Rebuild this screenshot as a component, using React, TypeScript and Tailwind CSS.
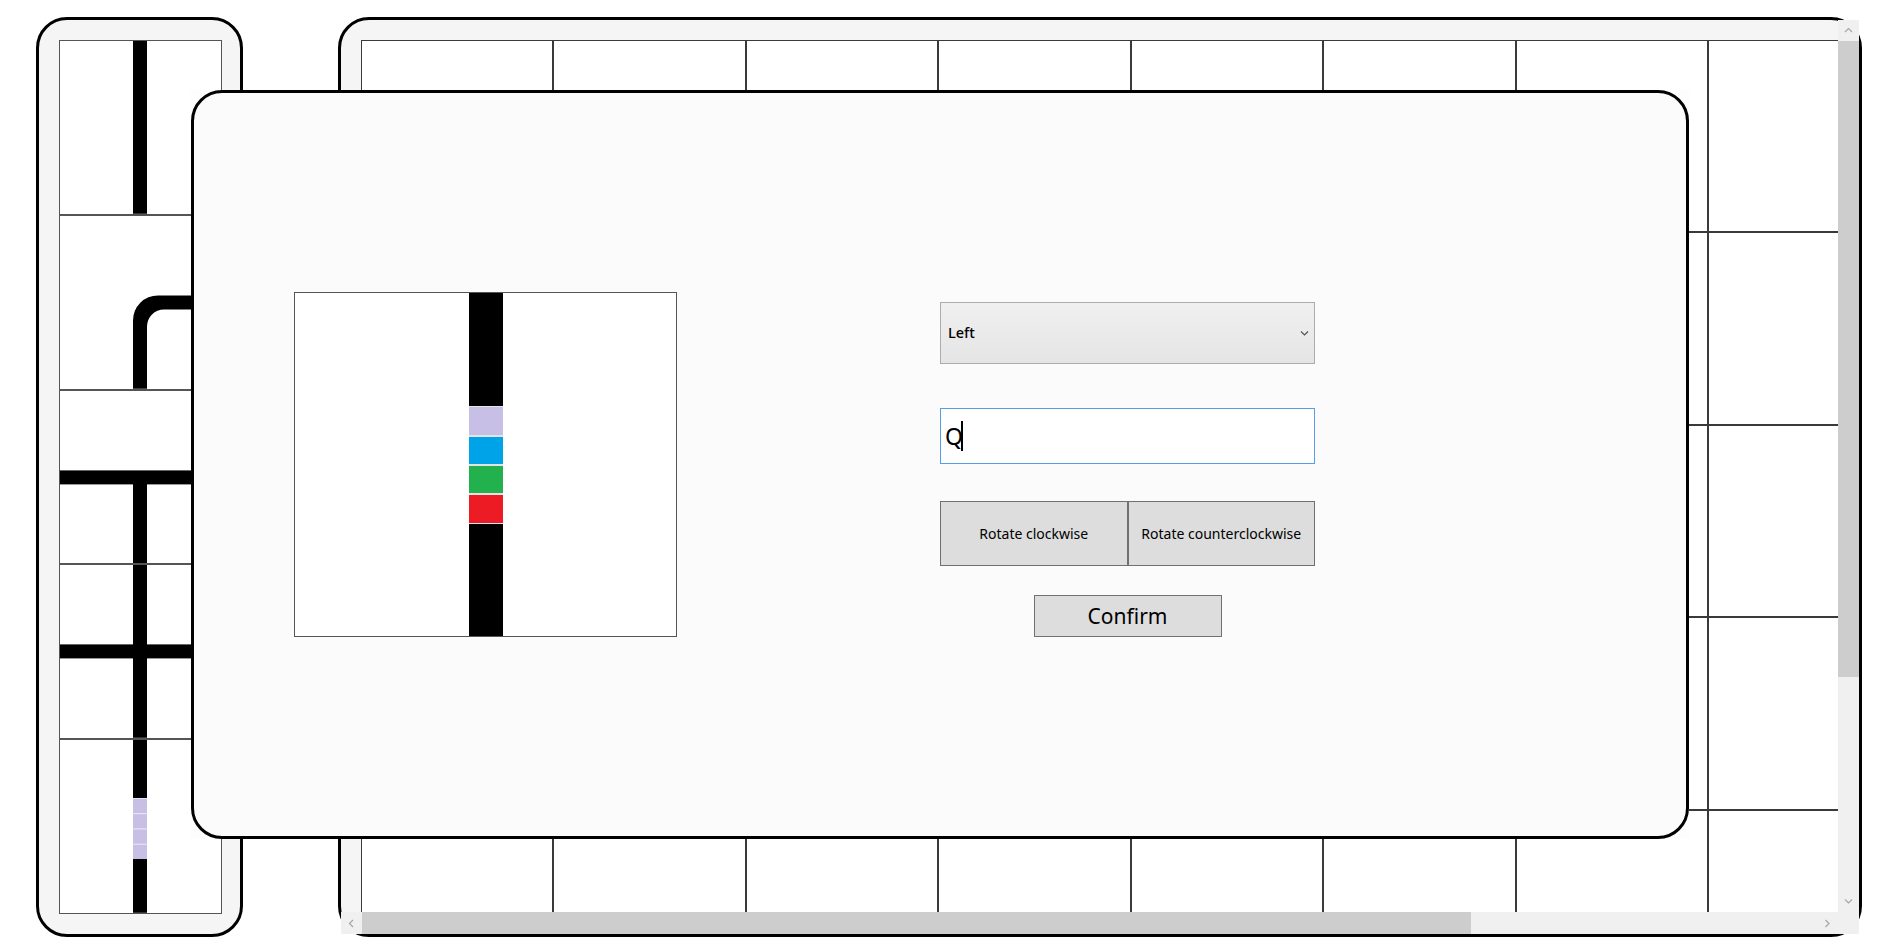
import React from 'react';

const font = "font-['Noto_Sans','Open_Sans',sans-serif]";

// left strip tiles (inner size 161 x 172.8)
const W = 161;
const H = 172.8;

const Tile = ({ kind }: { kind: string }) => (
  <div className="h-[174.8px] border border-[#555] bg-white">
    <svg width="100%" height="100%" viewBox={`0 0 ${W} ${H}`} className="block">
      {kind === 'straight' && <rect x={73} y={0} width={14} height={H} fill="#000" />}
      {kind === 'curve' && (
        <path d={`M73 ${H} V104.4 A25 25 0 0 1 98 79.4 H${W} V93.4 H104 A17 17 0 0 0 87 110.4 V${H} Z`} fill="#000" />
      )}
      {kind === 'tee' && (
        <>
          <rect x={0} y={79.4} width={W} height={14} fill="#000" />
          <rect x={73} y={86} width={14} height={H - 86} fill="#000" />
        </>
      )}
      {kind === 'cross' && (
        <>
          <rect x={0} y={79.4} width={W} height={14} fill="#000" />
          <rect x={73} y={0} width={14} height={H} fill="#000" />
        </>
      )}
      {kind === 'train' && (
        <>
          <rect x={73} y={0} width={14} height={H} fill="#000" />
          <rect x={73} y={58} width={14} height={61} fill="#eeeaf6" />
          {[58.8, 74.1, 89.4, 104.7].map((y) => (
            <rect key={y} x={73} y={y} width={14} height={14.3} fill="#c8c0e4" />
          ))}
        </>
      )}
    </svg>
  </div>
);

const Chevron = ({ dir, className }: { dir: 'up' | 'down' | 'left' | 'right'; className?: string }) => {
  const pts = {
    up: '1,5 4.5,1.5 8,5',
    down: '1,1.5 4.5,5 8,1.5',
    left: '5,1 1.5,4.5 5,8',
    right: '1.5,1 5,4.5 1.5,8',
  }[dir];
  const vb = dir === 'up' || dir === 'down' ? '0 0 9 6.5' : '0 0 6.5 9';
  const size = dir === 'up' || dir === 'down' ? 'w-[9px] h-[6.5px]' : 'w-[6.5px] h-[9px]';
  return (
    <svg viewBox={vb} className={`${size} ${className ?? ''}`}>
      <polyline points={pts} fill="none" stroke="currentColor" strokeWidth="1.2" />
    </svg>
  );
};

export default function App() {
  const rows = Array.from({ length: 5 });
  const cols = Array.from({ length: 8 });

  return (
    <div className={`relative w-[1889px] h-[945px] bg-white overflow-hidden ${font}`}>
      <div className="flex items-start pt-[17px] pl-[36px] gap-[95px]">
        {/* track pieces */}
        <div className="w-[207px] h-[920px] border-[3px] border-black rounded-[31px] bg-[#f5f5f5] pl-[20px] pt-[20px]">
          <div className="w-[163px] flex flex-col">
            <Tile kind="straight" />
            <Tile kind="curve" />
            <Tile kind="tee" />
            <Tile kind="cross" />
            <Tile kind="train" />
          </div>
        </div>

        {/* board */}
        <div className="w-[1524px] h-[920px] border-[3px] border-black rounded-[31px] bg-[#f5f5f5] grid grid-cols-[1fr_21px] grid-rows-[1fr_22px]">
          <div className="overflow-hidden pl-[19.5px] pt-[19.5px]">
            <div className="grid grid-cols-[repeat(8,192.5px)] w-max">
              {rows.map((_, r) =>
                cols.map((_, c) => (
                  <div key={`${r}-${c}`} className="h-[192.5px] border border-[#3a3a3a] bg-white" />
                ))
              )}
            </div>
          </div>
          <div className="flex flex-col bg-[#f0f0f0] text-[#a6a6a6]">
            <div className="h-[21px] flex items-center justify-center">
              <Chevron dir="up" />
            </div>
            <div className="h-[636px] bg-[#cdcdcd]" />
            <div className="flex-1" />
            <div className="h-[21px] flex items-center justify-center">
              <Chevron dir="down" />
            </div>
          </div>
          <div className="flex bg-[#f0f0f0] text-[#a6a6a6]">
            <div className="w-[21px] flex items-center justify-center">
              <Chevron dir="left" />
            </div>
            <div className="w-[1109px] bg-[#cdcdcd]" />
            <div className="flex-1" />
            <div className="w-[21px] flex items-center justify-center">
              <Chevron dir="right" />
            </div>
          </div>
          <div className="bg-[#f0f0f0]" />
        </div>
      </div>

      {/* placement dialog */}
      <div className="absolute left-[191px] top-[90px] w-[1498px] h-[749px] bg-[#fdfdfd]">
        <div className="w-full h-full border-[3px] border-black rounded-[31px] bg-[#fbfbfb] flex items-center">
          <div className="ml-[100px] w-[383px] h-[345px] border border-[#555] bg-white flex justify-center">
            <div className="w-[34px] flex flex-col bg-[#e4e4e4]">
              <div className="h-[113px] bg-black" />
              <div className="mt-[1px] h-[28px] bg-[#c8bfe7]" />
              <div className="mt-[2px] h-[27px] bg-[#00a2e8]" />
              <div className="mt-[2px] h-[27px] bg-[#22b14c]" />
              <div className="mt-[2px] h-[28px] bg-[#ed1c24]" />
              <div className="mt-[1px] flex-1 bg-black" />
            </div>
          </div>

          <div className="ml-[263px] mt-[10px] w-[375px] flex flex-col">
            <div className="h-[62px] border border-[#acacac] bg-gradient-to-b from-[#f0f0f0] to-[#e5e5e5] flex items-center justify-between pl-[7px] pr-[5px]">
              <span className="text-[14.5px] font-medium text-black">Left</span>
              <Chevron dir="down" className="text-[#555]" />
            </div>
            <div className="mt-[44px] h-[56px] border border-[#569de5] bg-white flex items-center pl-[4px]">
              <span className="text-[23px] leading-none text-black">Q</span>
              <span className="inline-block w-[2px] h-[30px] bg-black -ml-[2px]" />
            </div>
            <div className="mt-[37px] h-[65px] flex">
              <button className="flex-1 border border-[#707070] bg-[#dddddd] text-[14px] text-black">
                Rotate clockwise
              </button>
              <button className="flex-1 border border-[#707070] bg-[#dddddd] text-[14px] text-black">
                Rotate counterclockwise
              </button>
            </div>
            <div className="mt-[29px] flex justify-center">
              <button className="w-[188px] h-[42px] border border-[#707070] bg-[#dddddd] text-[21px] text-black leading-none">
                Confirm
              </button>
            </div>
          </div>
        </div>
      </div>
    </div>
  );
}
